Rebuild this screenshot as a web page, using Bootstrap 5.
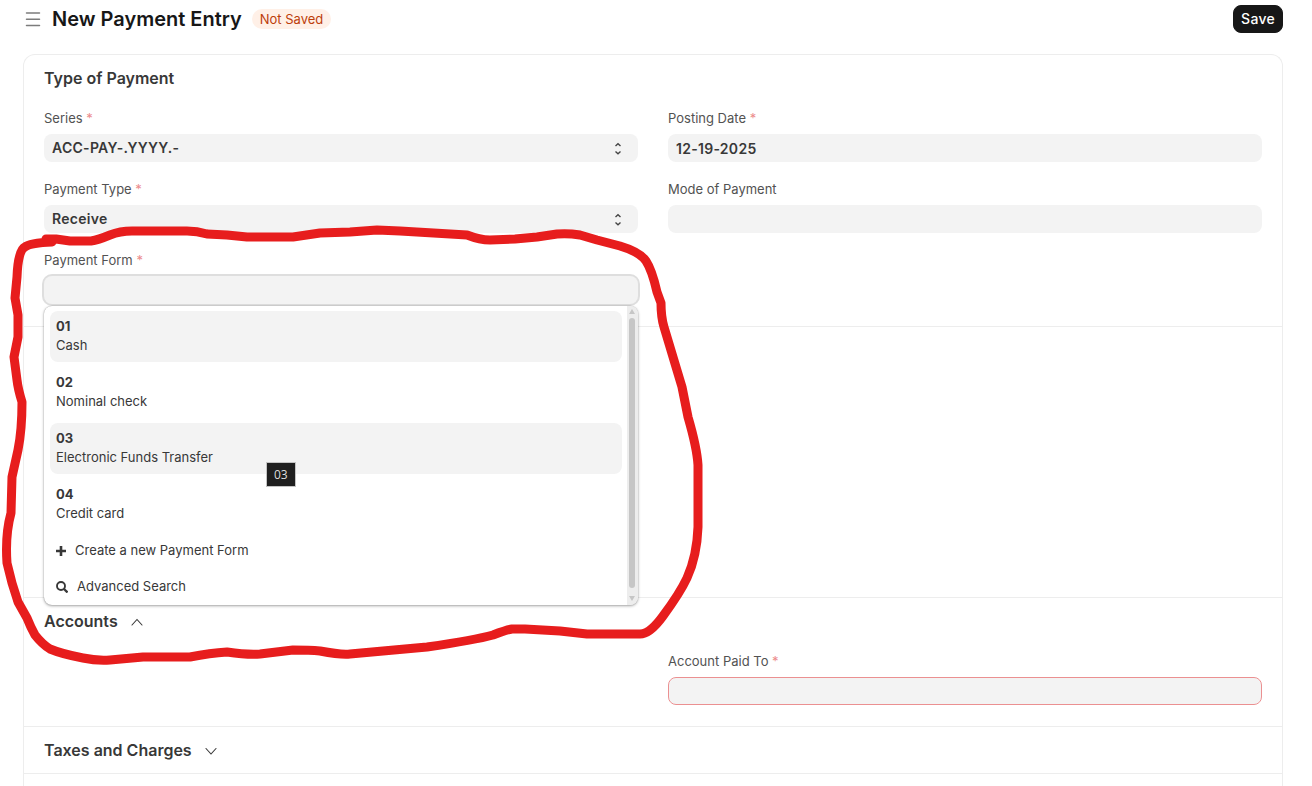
<!DOCTYPE html>
<html lang="en">
<head>
<meta charset="utf-8">
<meta name="viewport" content="width=device-width, initial-scale=1">
<title>New Payment Entry</title>
<link href="https://cdn.jsdelivr.net/npm/bootstrap@5.3.0/dist/css/bootstrap.min.css" rel="stylesheet">
<style>
  body { font-family: Inter, "Liberation Sans", sans-serif; font-size: 13px; line-height: 19px; color: #383838; background: #fff; }
  .page-wrap { padding: 0 29px 0 23px; overflow: hidden; }
  .page-head { height: 38px; margin-bottom: 16px; gap: 10px; }
  .page-title { font-size: 20px; line-height: 24px; font-weight: 600; color: #171717; }
  .menu-btn { width: 19px; height: 20px; color: #7c7c7c; }
  .status-pill { background: #fff0e7; color: #bd3e0c; font-size: 13px; font-weight: 400; line-height: 20px; padding: 0 8px; }
  .save-btn { --bs-btn-bg: #171717; --bs-btn-border-color: #171717; --bs-btn-color: #fff; --bs-btn-hover-bg: #383838; --bs-btn-hover-color: #fff;
    font-size: 14px; line-height: 20px; font-weight: 500; padding: 3px 7px; border-radius: 8px; letter-spacing: .02em; }
  .form-sheet { border: 1px solid #ededed; border-bottom: 0; border-radius: 12px 12px 0 0; }
  .form-part { padding: 12px 20px 22px; border-bottom: 1px solid #ededed; }
  .form-part:last-child { border-bottom: 0; }
  .part-covered { min-height: 271px; }
  .part-open { padding-bottom: 21px; }
  .part-title { font-size: 16px; line-height: 22px; font-weight: 600; margin: 0 0 20px; color: #383838; }
  .part-folded { padding-bottom: 12px; }
  .part-folded .part-title { margin: 0; }
  .part-toggle { font: inherit; color: inherit; gap: 13px; }
  .field-row { --bs-gutter-x: 30px; }
  .field-label { color: #525252; margin-bottom: 6px; line-height: 19px; display: block; }
  .req { color: #ec8b8b; }
  .field { margin-bottom: 18px; position: relative; }
  .field .form-control, .field .form-select { height: 28px; padding: 0 8px; border: 0; border-radius: 8px; background-color: #f3f3f3;
    font-size: 14px; line-height: 20px; font-weight: 600; letter-spacing: .02em; color: #383838; }
  .field .form-select { background-size: 8px 14px; background-position: right 16px center;
    background-image: url("data:image/svg+xml,%3Csvg xmlns='http://www.w3.org/2000/svg' viewBox='0 0 8 14'%3E%3Cpath d='M1.5 5 4 2.8 6.500 5M1.500 10.500 4 12.700 6.500 10.500' fill='none' stroke='%23444' stroke-width='1.400'/%3E%3C/svg%3E"); }
  .field .is-active { box-shadow: 0 0 0 2px #dedede; }
  .field .is-missing { border: 1px solid #eb9091; }
  .pick-menu { position: absolute; top: 100%; left: 0; right: 0; margin-top: 2px; z-index: 5; background: #fff; border-radius: 8px; overflow: hidden;
    box-shadow: 0 0 1px rgba(0,0,0,.35), 0 1px 3px rgba(0,0,0,.35); }
  .pick-list { padding: 5px 5px 3px 6px; gap: 5px; }
  .pick-item { border: 0; background: none; border-radius: 8px; padding: 6px 6px 7px; text-align: left; color: #383838; line-height: 19px; display: block; }
  .pick-item.is-lit { background: #f3f3f3; }
  .pick-item strong { display: block; font-weight: 700; }
  .pick-item.pick-action { padding: 6px; display: flex; align-items: center; gap: 9px; }
  .pick-rail { width: 11px; background: #ededed; padding: 3px 3px 3px 2px; gap: 3px; }
  .pick-thumb { width: 6px; border-radius: 3px; background: #c6c6c6; }
  .pick-down { margin-top: 5px; }
  .hint { position: absolute; z-index: 6; left: 222px; top: 211px; background: #1f1f1f; color: #ddd; border: 1px solid #c4c4c4;
    font: 12px/23px "Open Sans", "Noto Sans", sans-serif; padding: 0 7px; }
  .marker { position: absolute; left: 0; top: 0; z-index: 10; pointer-events: none; }
</style>
</head>
<body>
<div class="page-wrap position-relative d-flex flex-column min-vh-100">
  <header class="page-head d-flex align-items-center">
    <button type="button" class="menu-btn btn p-0 border-0 d-flex" aria-label="Toggle sidebar">
      <svg width="19" height="20" viewBox="0 0 19 20" fill="none" stroke="currentColor" stroke-width="1.500" stroke-linecap="round"><path d="M3.500 4h13M3.500 10.300h13M3.500 16.500h13"/></svg>
    </button>
    <h1 class="page-title m-0">New Payment Entry</h1>
    <span class="status-pill badge rounded-pill">Not Saved</span>
    <button type="button" class="save-btn btn ms-auto">Save</button>
  </header>

  <form class="form-sheet flex-grow-1">
    <section class="form-part">
      <h2 class="part-title">Type of Payment</h2>
      <div class="row field-row">
        <div class="col-6">
          <div class="field">
            <label class="field-label" for="series">Series <span class="req">*</span></label>
            <select class="form-select" id="series"><option>ACC-PAY-.YYYY.-</option></select>
          </div>
          <div class="field">
            <label class="field-label" for="ptype">Payment Type <span class="req">*</span></label>
            <select class="form-select" id="ptype"><option>Receive</option></select>
          </div>
          <div class="field mb-0">
            <label class="field-label" for="pform">Payment Form <span class="req">*</span></label>
            <input class="form-control is-active" id="pform" type="text" autocomplete="off">
            <div class="pick-menu d-flex">
              <div class="pick-list d-flex flex-column flex-grow-1">
                <button type="button" class="pick-item is-lit"><strong>01</strong>Cash</button>
                <button type="button" class="pick-item"><strong>02</strong>Nominal check</button>
                <button type="button" class="pick-item is-lit"><strong>03</strong>Electronic Funds Transfer</button>
                <button type="button" class="pick-item"><strong>04</strong>Credit card</button>
                <button type="button" class="pick-item pick-action">
                  <svg width="10" height="10" viewBox="0 0 10 10" fill="none" stroke="currentColor" stroke-width="2.600"><path d="M5 0v10M0 5h10"/></svg>
                  Create a new Payment Form
                </button>
                <button type="button" class="pick-item pick-action">
                  <svg width="12" height="12" viewBox="0 0 12 12" fill="none" stroke="currentColor" stroke-width="1.900"><circle cx="5" cy="5" r="4"/><path d="m8 8 3.500 3.500" stroke-width="2.300"/></svg>
                  Advanced Search
                </button>
              </div>
              <div class="pick-rail d-flex flex-column align-items-center">
                <svg width="6" height="6" viewBox="0 0 6 6" fill="#c6c6c6"><path d="M3 0 6 5H0z"/></svg>
                <div class="pick-thumb flex-grow-1"></div>
                <svg class="pick-down" width="6" height="6" viewBox="0 0 6 6" fill="#c6c6c6"><path d="M0 0h6L3 5z"/></svg>
              </div>
            </div>
            <div class="hint" role="tooltip">03</div>
          </div>
        </div>
        <div class="col-6">
          <div class="field">
            <label class="field-label" for="pdate">Posting Date <span class="req">*</span></label>
            <input class="form-control" id="pdate" type="text" value="12-19-2025">
          </div>
          <div class="field">
            <label class="field-label" for="mode">Mode of Payment</label>
            <input class="form-control" id="mode" type="text">
          </div>
        </div>
      </div>
    </section>

    <section class="form-part part-covered"></section>

    <section class="form-part part-open">
      <h2 class="part-title">
        <button type="button" class="part-toggle btn p-0 border-0 d-flex align-items-center">Accounts
          <svg width="12" height="12" viewBox="0 0 12 12" fill="none" stroke="currentColor" stroke-width="1.100" stroke-linecap="round"><path d="m1 10 5-5.500 5 5.500"/></svg>
        </button>
      </h2>
      <div class="row field-row">
        <div class="col-6 offset-6">
          <div class="field mb-0">
            <label class="field-label" for="paidto">Account Paid To <span class="req">*</span></label>
            <input class="form-control is-missing" id="paidto" type="text">
          </div>
        </div>
      </div>
    </section>

    <section class="form-part part-folded">
      <h2 class="part-title">
        <button type="button" class="part-toggle btn p-0 border-0 d-flex align-items-center">Taxes and Charges
          <svg width="12" height="12" viewBox="0 0 12 12" fill="none" stroke="currentColor" stroke-width="1.100" stroke-linecap="round"><path d="m1 4.500 5 5.500 5-5.500"/></svg>
        </button>
      </h2>
    </section>

    <section class="form-part pt-0 pb-0"></section>
  </form>

  <!-- hand-drawn ring round the Payment Form field -->
  <svg class="marker" width="720" height="680" viewBox="0 0 720 680" fill="none" stroke="#e71d1d" stroke-width="9" stroke-linecap="round" stroke-linejoin="round" aria-hidden="true">
    <path d="M46 239 56 239 70 241 91 241Q98 240 110 235 120 231 132 231L187 231Q197 231 207 234L227 235 247 237 293 237 320 233 350 232 377 230 400 231 467 235Q480 240 490 240L515 239 537 237 557 234Q568 233 580 235L597 240 620 246Q640 252 646 261 652 270 657 292L661 303Q661 317 664 327L673 357 682 387 688 417Q697 448 698 465L698 527Q697 556 687 578 680 593 663 616 650 634 640 634L587 634 560 631 525 629 512 629Q506 630 493 635 475 640 427 647L350 654Q341 655 320 651 310 650 293 650L260 654Q248 655 227 652 210 653 190 657L143 657 110 660Q97 661 83 658 62 654 50 649 42 644 35 635 31 628 27 618L18 602 12 583 7 563Q5 535 11 513L12 477 18 450Q22 430 22 402 18 389 17 380L14 357 18 337 18 315 15 298 17 277Q18 250 25 247 30 243 52 242"/>
  </svg>
</div>
<script src="https://cdn.jsdelivr.net/npm/bootstrap@5.3.0/dist/js/bootstrap.bundle.min.js"></script>
</body>
</html>
